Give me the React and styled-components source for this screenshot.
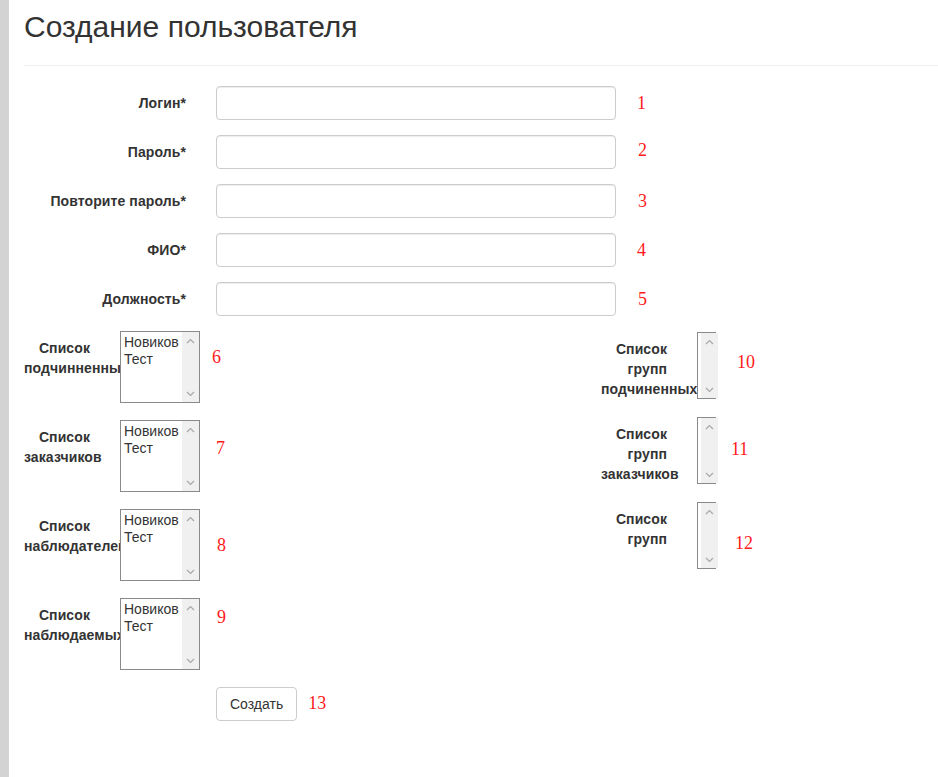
import React from "react";
import styled, { createGlobalStyle } from "styled-components";

const GlobalStyle = createGlobalStyle`
  html, body {
    margin: 0;
    padding: 0;
    background: #fff;
  }
  body {
    font-family: "Liberation Sans", Arial, sans-serif;
    font-size: 14px;
    line-height: 20px;
    color: #333;
  }
  * { box-sizing: border-box; }
`;

const Page = styled.div`
  display: flex;
  min-height: 100vh;
`;

const Sidebar = styled.div`
  width: 9px;
  flex-shrink: 0;
  background: #d3d3d3;
`;

const Main = styled.main`
  flex: 1;
  min-width: 0;
  padding-left: 15px;
`;

const Header = styled.div`
  padding: 10px 0 22px;
  border-bottom: 1px solid #eee;
`;

const Title = styled.h2`
  margin: 0;
  font-family: "Liberation Sans", Arial, sans-serif;
  font-size: 30px;
  font-weight: 400;
  line-height: 33px;
  color: #333;
`;

const Form = styled.form`
  display: flex;
  flex-direction: column;
  gap: 15px;
  padding-top: 20px;
`;

const FieldRow = styled.div`
  display: flex;
  align-items: flex-start;
`;

const FieldLabel = styled.label`
  width: 162px;
  flex-shrink: 0;
  margin-right: 30px;
  padding-top: 7px;
  text-align: right;
  font-weight: 700;
  font-size: 14px;
  line-height: 20px;
  letter-spacing: 0.1px;
  color: #333;
`;

const TextInput = styled.input`
  width: 400px;
  height: 34px;
  padding: 6px 12px;
  border: 1px solid #ccc;
  border-radius: 4px;
  background: #fff;
  box-shadow: inset 0 1px 1px rgba(0, 0, 0, 0.075);
  font: 14px "Liberation Sans", Arial, sans-serif;
  color: #555;
  outline: none;
`;

const Marker = styled.span`
  flex-shrink: 0;
  margin-left: ${(p) => p.$dx}px;
  margin-top: ${(p) => p.$dy}px;
  font-family: "Liberation Serif", "Times New Roman", serif;
  font-size: 18px;
  line-height: 20px;
  color: #ff1a1a;
`;

const ListsGrid = styled.div`
  display: grid;
  grid-template-columns: 577px 1fr;
  align-items: start;
`;

const ListColumn = styled.div`
  display: flex;
  flex-direction: column;
  gap: ${(p) => p.$gap}px;
  padding-top: ${(p) => p.$offset || 0}px;
`;

const ListRow = styled.div`
  display: flex;
  align-items: flex-start;
`;

const ListLabel = styled.label`
  width: 96px;
  flex-shrink: 0;
  padding: 7px 30px 0 0;
  overflow: hidden;
  text-align: right;
  font-weight: 700;
  font-size: 14px;
  line-height: 20px;
  letter-spacing: 0.1px;
  color: #333;
`;

const ListBox = styled.div`
  display: flex;
  flex-shrink: 0;
  width: ${(p) => p.$w}px;
  height: ${(p) => p.$h}px;
  border: 1px solid #8a8a8a;
  background: #fff;
`;

const Options = styled.div`
  flex: 1;
  min-width: 0;
  overflow: hidden;
  padding: 2px 0 0 3px;
  font-size: 14px;
  line-height: 17px;
  color: #333;
  white-space: nowrap;
`;

const Option = styled.div``;

const ScrollTrack = styled.div`
  width: 17px;
  flex-shrink: 0;
  background: #f0f0f0;
  display: flex;
  flex-direction: column;
  justify-content: space-between;
`;

const ArrowButton = styled.div`
  width: 17px;
  height: 17px;
  display: flex;
  align-items: center;
  justify-content: center;
`;

const Actions = styled.div`
  display: flex;
  align-items: flex-start;
  padding-left: 192px;
  margin-top: 2px;
`;

const Button = styled.button`
  height: 34px;
  padding: 6px 13px;
  border: 1px solid #ccc;
  border-radius: 4px;
  background: #fff;
  font: 14px/20px "Liberation Sans", Arial, sans-serif;
  color: #333;
  cursor: pointer;
`;

const Chevron = ({ up }) => (
  <svg width="9" height="6" viewBox="0 0 9 6">
    <polyline
      points={up ? "1,5 4.5,1.5 8,5" : "1,1 4.5,4.5 8,1"}
      fill="none"
      stroke="#a8a8a8"
      strokeWidth="1.2"
    />
  </svg>
);

const Select = ({ w, h, items }) => (
  <ListBox $w={w} $h={h}>
    <Options>
      {items.map((it) => (
        <Option key={it}>{it}</Option>
      ))}
    </Options>
    <ScrollTrack>
      <ArrowButton>
        <Chevron up />
      </ArrowButton>
      <ArrowButton>
        <Chevron />
      </ArrowButton>
    </ScrollTrack>
  </ListBox>
);

const fields = [
  { label: "Логин*", n: 1, dx: 21, dy: 7, type: "text" },
  { label: "Пароль*", n: 2, dx: 22, dy: 5, type: "password" },
  { label: "Повторите пароль*", n: 3, dx: 22, dy: 7, type: "password" },
  { label: "ФИО*", n: 4, dx: 21, dy: 7, type: "text" },
  { label: "Должность*", n: 5, dx: 22, dy: 7, type: "text" },
];

const people = ["Новиков", "Тест"];

const leftLists = [
  { label: "Список подчинненных", n: 6, dx: 12, dy: 16 },
  { label: "Список заказчиков", n: 7, dx: 16, dy: 18 },
  { label: "Список наблюдателей", n: 8, dx: 17, dy: 26 },
  { label: "Список наблюдаемых", n: 9, dx: 17, dy: 9 },
];

const rightLists = [
  { label: "Список групп подчиненных", n: 10, dx: 21, dy: 20 },
  { label: "Список групп заказчиков", n: 11, dx: 15, dy: 22 },
  { label: "Список групп", n: 12, dx: 19, dy: 31 },
];

export default function App() {
  return (
    <>
      <GlobalStyle />
      <Page>
        <Sidebar />
        <Main>
          <Header>
            <Title>Создание пользователя</Title>
          </Header>
          <Form onSubmit={(e) => e.preventDefault()}>
            {fields.map((f) => (
              <FieldRow key={f.n}>
                <FieldLabel>{f.label}</FieldLabel>
                <TextInput type={f.type} />
                <Marker $dx={f.dx} $dy={f.dy}>
                  {f.n}
                </Marker>
              </FieldRow>
            ))}
            <ListsGrid>
              <ListColumn $gap={17}>
                {leftLists.map((l) => (
                  <ListRow key={l.n}>
                    <ListLabel>{l.label}</ListLabel>
                    <Select w={80} h={72} items={people} />
                    <Marker $dx={l.dx} $dy={l.dy}>
                      {l.n}
                    </Marker>
                  </ListRow>
                ))}
              </ListColumn>
              <ListColumn $gap={18} $offset={1}>
                {rightLists.map((l) => (
                  <ListRow key={l.n}>
                    <ListLabel>{l.label}</ListLabel>
                    <Select w={19} h={67} items={[]} />
                    <Marker $dx={l.dx} $dy={l.dy}>
                      {l.n}
                    </Marker>
                  </ListRow>
                ))}
              </ListColumn>
            </ListsGrid>
            <Actions>
              <Button type="submit">Создать</Button>
              <Marker $dx={11} $dy={6}>
                13
              </Marker>
            </Actions>
          </Form>
        </Main>
      </Page>
    </>
  );
}
